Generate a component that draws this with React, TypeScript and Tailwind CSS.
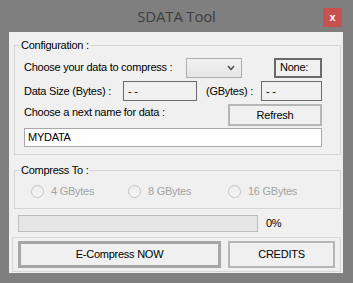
const font = { fontFamily: '"Liberation Sans", Arial, sans-serif' };

const Radio = ({ label, className = "" }: { label: string; className?: string }) => (
  <div className={`flex items-center ${className}`}>
    <div className="h-[13px] w-[13px] rounded-full border border-[#c4c4c4] bg-[linear-gradient(#ececec,#f6f6f6)]" />
    <span className="ml-[7px] text-[11px] leading-[13px] tracking-[-0.25px] text-[#a3a3a3]">{label}</span>
  </div>
);

const SmallBox = ({ text, className = "" }: { text: string; className?: string }) => (
  <div className={`flex h-[20px] items-center border border-[#6a6a6a] bg-[#f0f0f0] px-[4px] text-[11px] text-black ${className}`}>
    {text}
  </div>
);

export default function App() {
  return (
    <div style={font} className="flex h-[283px] w-[353px] flex-col bg-[#7f7f7f] text-[11px] tracking-[-0.25px] text-black">
      {/* title bar */}
      <div className="relative flex h-[32px] items-center justify-center">
        <span style={{ fontFamily: '"Open Sans", sans-serif' }} className="text-[15px] leading-[20px] tracking-[-0.2px] text-[#3d3d3d]">
          SDATA Tool
        </span>
        <div className="absolute left-[323px] top-[8px] flex h-[19px] w-[19px] items-center justify-center bg-[#c75050] text-[11px] font-bold leading-none text-white">
          x
        </div>
      </div>

      {/* client area */}
      <div className="ml-[9px] flex h-[241px] w-[334px] flex-col bg-[#f0f0f0]">
        <fieldset className="ml-[5px] mt-[6px] w-[327px] border border-[#d5d5d5] p-0">
          <legend className="ml-[5px] px-px text-[11px] leading-[14px] text-black">Configuration :</legend>
          <div className="pb-[7px] pl-[9px]">
            <div className="mt-[5px] flex h-[21px] items-center">
              <span className="w-[162px]">Choose your data to compress :</span>
              <div className="flex h-[20px] w-[56px] items-center justify-end border border-[#adadad] bg-[linear-gradient(#f2f2f2,#e6e6e6)] pr-[6px]">
                <svg width="8" height="6" viewBox="0 0 8 6">
                  <polyline points="1,1 4,4.5 7,1" fill="none" stroke="#555" strokeWidth="1.6" />
                </svg>
              </div>
              <SmallBox text="None:" className="ml-[32px] w-[48px] border-2 px-[1px]" />
            </div>
            <div className="mt-[3px] flex h-[20px] items-center">
              <span className="w-[99px]">Data Size (Bytes) :</span>
              <SmallBox text="- -" className="w-[74px]" />
              <span className="ml-[9px] w-[55px]">(GBytes) :</span>
              <SmallBox text="- -" className="w-[61px]" />
            </div>
            <div className="mt-[3px] flex h-[22px] items-start">
              <span className="w-[204px] pt-[1px] leading-[14px]">Choose a next name for data :</span>
              <div className="flex h-[22px] w-[94px] items-center justify-center border-2 border-[#b6b6b6] bg-[#f0f0f0]">
                Refresh
              </div>
            </div>
            <div className="mt-[2px] flex h-[19px] w-[298px] items-center border border-[#a9a9a9] bg-white px-[3px]">
              MYDATA
            </div>
          </div>
        </fieldset>

        <fieldset className="ml-[5px] mt-[8px] w-[327px] border border-[#d5d5d5] p-0">
          <legend className="ml-[5px] px-px text-[11px] leading-[14px] text-black">Compress To :</legend>
          <div className="mt-[8px] flex pb-[10px] pl-[16px]">
            <Radio label="4 GBytes" className="w-[97px]" />
            <Radio label="8 GBytes" className="w-[100px]" />
            <Radio label="16 GBytes" />
          </div>
        </fieldset>

        <div className="ml-[9px] mt-[6px] flex items-center">
          <div className="h-[17px] w-[240px] border border-[#bcbcbc] bg-[#e6e6e6]" />
          <span className="ml-[8px]">0%</span>
        </div>

        <div className="ml-[3px] mt-[5px] flex h-[35px] w-[329px] border border-[#d8d8d8] pl-[5px] pt-[3px]">
          <div className="flex h-[27px] w-[203px] items-center justify-center border-[3px] border-[#a6a6a6] bg-[#f0f0f0]">
            E-Compress NOW
          </div>
          <div className="ml-[7px] flex h-[27px] w-[107px] items-center justify-center border-2 border-[#b6b6b6] bg-[#f0f0f0]">
            CREDITS
          </div>
        </div>
      </div>
    </div>
  );
}
